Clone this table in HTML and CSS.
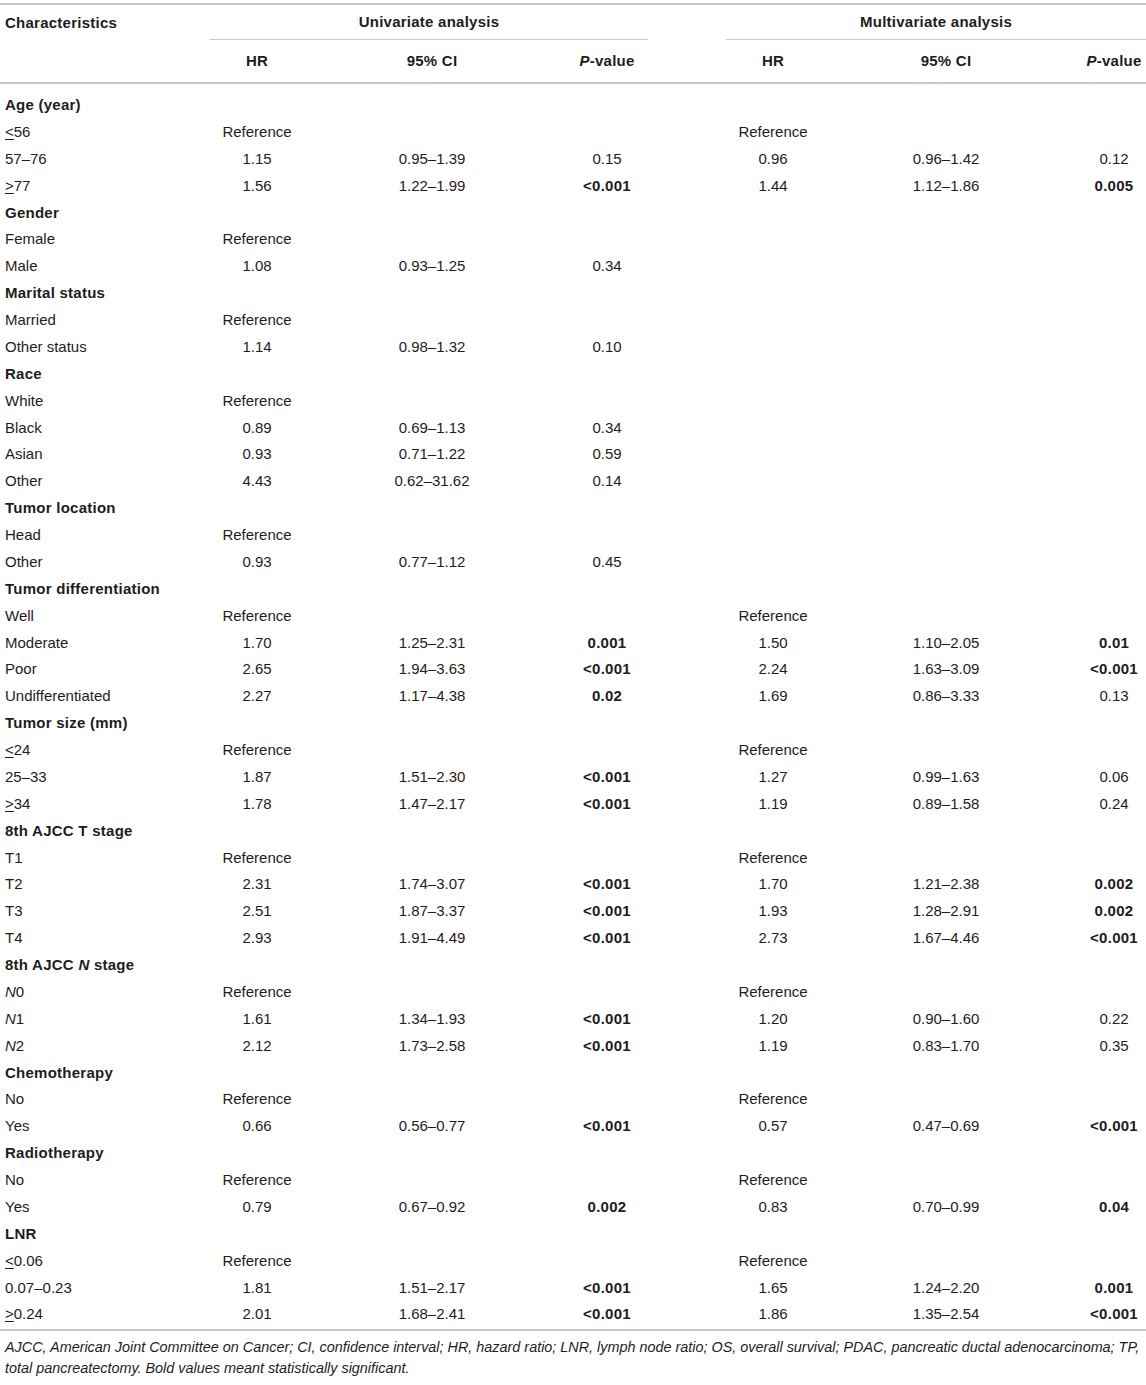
FILE: index.html
```html
<!DOCTYPE html>
<html lang="en">
  <head>
    <meta charset="UTF-8" />
    <title>Univariate and multivariate analysis of OS</title>
    <link rel="stylesheet" href="styles.css">
  </head>
  <body>
    <table class="results">
      <colgroup>
        <col class="c-char">
        <col class="c-hr">
        <col class="c-ci">
        <col class="c-p">
        <col class="c-gap">
        <col class="c-hr">
        <col class="c-ci2">
        <col class="c-p2">
      </colgroup>
      <thead>
        <tr class="group-row">
          <th class="char">Characteristics</th>
          <th colspan="3" class="group"><div class="group-label uni">Univariate analysis</div></th>
          <th></th>
          <th colspan="3" class="group"><div class="group-label">Multivariate analysis</div></th>
        </tr>
        <tr class="sub-row">
          <th></th>
          <th>HR</th>
          <th>95% CI</th>
          <th><i>P</i>-value</th>
          <th></th>
          <th>HR</th>
          <th>95% CI</th>
          <th class="p2"><i>P</i>-value</th>
        </tr>
      </thead>
      <tbody>
        <tr class="cat first"><td colspan="8">Age (year)</td></tr>
        <tr><td><span class="le">&lt;</span>56</td><td>Reference</td><td></td><td></td><td></td><td>Reference</td></tr>
        <tr><td>57–76</td><td>1.15</td><td>0.95–1.39</td><td>0.15</td><td></td><td>0.96</td><td>0.96–1.42</td><td class="p2">0.12</td></tr>
        <tr><td><span class="le">&gt;</span>77</td><td>1.56</td><td>1.22–1.99</td><td><b>&lt;0.001</b></td><td></td><td>1.44</td><td>1.12–1.86</td><td class="p2"><b>0.005</b></td></tr>

        <tr class="cat"><td colspan="8">Gender</td></tr>
        <tr><td>Female</td><td>Reference</td></tr>
        <tr><td>Male</td><td>1.08</td><td>0.93–1.25</td><td>0.34</td></tr>

        <tr class="cat"><td colspan="8">Marital status</td></tr>
        <tr><td>Married</td><td>Reference</td></tr>
        <tr><td>Other status</td><td>1.14</td><td>0.98–1.32</td><td>0.10</td></tr>

        <tr class="cat"><td colspan="8">Race</td></tr>
        <tr><td>White</td><td>Reference</td></tr>
        <tr><td>Black</td><td>0.89</td><td>0.69–1.13</td><td>0.34</td></tr>
        <tr><td>Asian</td><td>0.93</td><td>0.71–1.22</td><td>0.59</td></tr>
        <tr><td>Other</td><td>4.43</td><td>0.62–31.62</td><td>0.14</td></tr>

        <tr class="cat"><td colspan="8">Tumor location</td></tr>
        <tr><td>Head</td><td>Reference</td></tr>
        <tr><td>Other</td><td>0.93</td><td>0.77–1.12</td><td>0.45</td></tr>

        <tr class="cat"><td colspan="8">Tumor differentiation</td></tr>
        <tr><td>Well</td><td>Reference</td><td></td><td></td><td></td><td>Reference</td></tr>
        <tr><td>Moderate</td><td>1.70</td><td>1.25–2.31</td><td><b>0.001</b></td><td></td><td>1.50</td><td>1.10–2.05</td><td class="p2"><b>0.01</b></td></tr>
        <tr><td>Poor</td><td>2.65</td><td>1.94–3.63</td><td><b>&lt;0.001</b></td><td></td><td>2.24</td><td>1.63–3.09</td><td class="p2"><b>&lt;0.001</b></td></tr>
        <tr><td>Undifferentiated</td><td>2.27</td><td>1.17–4.38</td><td><b>0.02</b></td><td></td><td>1.69</td><td>0.86–3.33</td><td class="p2">0.13</td></tr>

        <tr class="cat"><td colspan="8">Tumor size (mm)</td></tr>
        <tr><td><span class="le">&lt;</span>24</td><td>Reference</td><td></td><td></td><td></td><td>Reference</td></tr>
        <tr><td>25–33</td><td>1.87</td><td>1.51–2.30</td><td><b>&lt;0.001</b></td><td></td><td>1.27</td><td>0.99–1.63</td><td class="p2">0.06</td></tr>
        <tr><td><span class="le">&gt;</span>34</td><td>1.78</td><td>1.47–2.17</td><td><b>&lt;0.001</b></td><td></td><td>1.19</td><td>0.89–1.58</td><td class="p2">0.24</td></tr>

        <tr class="cat"><td colspan="8">8th AJCC T stage</td></tr>
        <tr><td>T1</td><td>Reference</td><td></td><td></td><td></td><td>Reference</td></tr>
        <tr><td>T2</td><td>2.31</td><td>1.74–3.07</td><td><b>&lt;0.001</b></td><td></td><td>1.70</td><td>1.21–2.38</td><td class="p2"><b>0.002</b></td></tr>
        <tr><td>T3</td><td>2.51</td><td>1.87–3.37</td><td><b>&lt;0.001</b></td><td></td><td>1.93</td><td>1.28–2.91</td><td class="p2"><b>0.002</b></td></tr>
        <tr><td>T4</td><td>2.93</td><td>1.91–4.49</td><td><b>&lt;0.001</b></td><td></td><td>2.73</td><td>1.67–4.46</td><td class="p2"><b>&lt;0.001</b></td></tr>

        <tr class="cat"><td colspan="8">8th AJCC <i>N</i> stage</td></tr>
        <tr><td><i>N</i>0</td><td>Reference</td><td></td><td></td><td></td><td>Reference</td></tr>
        <tr><td><i>N</i>1</td><td>1.61</td><td>1.34–1.93</td><td><b>&lt;0.001</b></td><td></td><td>1.20</td><td>0.90–1.60</td><td class="p2">0.22</td></tr>
        <tr><td><i>N</i>2</td><td>2.12</td><td>1.73–2.58</td><td><b>&lt;0.001</b></td><td></td><td>1.19</td><td>0.83–1.70</td><td class="p2">0.35</td></tr>

        <tr class="cat"><td colspan="8">Chemotherapy</td></tr>
        <tr><td>No</td><td>Reference</td><td></td><td></td><td></td><td>Reference</td></tr>
        <tr><td>Yes</td><td>0.66</td><td>0.56–0.77</td><td><b>&lt;0.001</b></td><td></td><td>0.57</td><td>0.47–0.69</td><td class="p2"><b>&lt;0.001</b></td></tr>

        <tr class="cat"><td colspan="8">Radiotherapy</td></tr>
        <tr><td>No</td><td>Reference</td><td></td><td></td><td></td><td>Reference</td></tr>
        <tr><td>Yes</td><td>0.79</td><td>0.67–0.92</td><td><b>0.002</b></td><td></td><td>0.83</td><td>0.70–0.99</td><td class="p2"><b>0.04</b></td></tr>

        <tr class="cat"><td colspan="8">LNR</td></tr>
        <tr><td><span class="le">&lt;</span>0.06</td><td>Reference</td><td></td><td></td><td></td><td>Reference</td></tr>
        <tr><td>0.07–0.23</td><td>1.81</td><td>1.51–2.17</td><td><b>&lt;0.001</b></td><td></td><td>1.65</td><td>1.24–2.20</td><td class="p2"><b>0.001</b></td></tr>
        <tr class="last"><td><span class="le">&gt;</span>0.24</td><td>2.01</td><td>1.68–2.41</td><td><b>&lt;0.001</b></td><td></td><td>1.86</td><td>1.35–2.54</td><td class="p2"><b>&lt;0.001</b></td></tr>
      </tbody>
    </table>

    <!-- Table footnote -->
    <p class="footnote">AJCC, American Joint Committee on Cancer; CI, confidence interval; HR, hazard ratio; LNR, lymph node ratio; OS, overall survival; PDAC, pancreatic ductal adenocarcinoma; TP, total pancreatectomy. Bold values meant statistically significant.</p>
  </body>
</html>
```

FILE: styles.css
```css
body {
  margin: 0;
  padding: 3px 0 0;
  font-family: 'Liberation Sans', Arial, sans-serif;
  font-size: 15px;
  color: #1f1c1d;
  background-color: #ffffff;
}

/* Results table */
.results {
  width: 1146px;
  table-layout: fixed;
  border-collapse: collapse;
  border-top: 2px solid #c9c9c9;
  border-bottom: 2px solid #c9c9c9;
}

.c-char { width: 210px; }
.c-hr { width: 94px; }
.c-ci { width: 256px; }
.c-p { width: 94px; }
.c-gap { width: 72px; }
.c-ci2 { width: 252px; }
.c-p2 { width: 74px; }

.results th,
.results td {
  padding: 4.94px 5px;
  line-height: 17px;
  text-align: center;
  font-weight: normal;
  white-space: nowrap;
}

.results td:first-child,
.results th.char {
  text-align: left;
}

.results th,
.results b,
.cat td {
  font-weight: 700;
  letter-spacing: 0.25px;
}

.results .p2 {
  padding-left: 10px;
  padding-right: 0;
}

/* Header rows */
.group-row th {
  height: 35px;
  padding-top: 0;
  padding-bottom: 0;
  vertical-align: middle;
}

.group-row th.group {
  padding: 0;
  vertical-align: bottom;
}

.group-label {
  padding: 0 0 9px;
  border-bottom: 1.5px solid #c9c9c9;
}

.group-label.uni {
  margin-right: 6px;
}

.sub-row {
  border-bottom: 2px solid #c9c9c9;
}

.sub-row th {
  height: 40px;
  padding-top: 0;
  padding-bottom: 2px;
}

/* Body rows */
.first td {
  padding-top: 12px;
}

.last td {
  padding-bottom: 7px;
}

.le {
  text-decoration: underline;
  text-underline-offset: 2px;
  text-decoration-thickness: 1px;
}

.footnote {
  margin: 0;
  padding: 6px 5px 0;
  font-size: 14.4px;
  line-height: 21px;
  font-style: italic;
}
```
